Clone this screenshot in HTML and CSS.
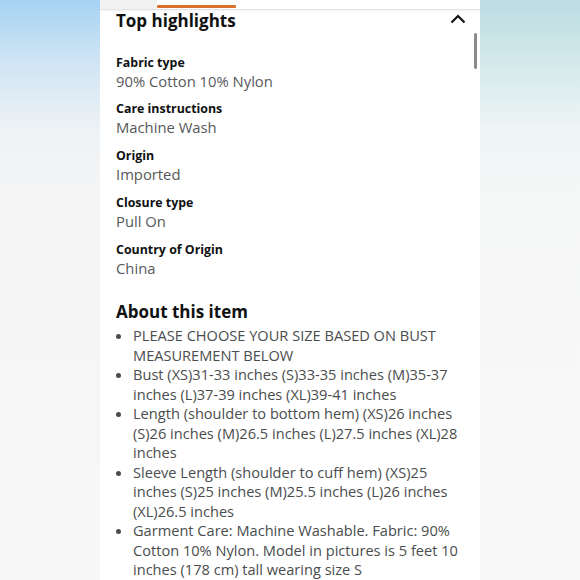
FILE: index.html
```html
<!DOCTYPE html>
<html>
<head>
<meta charset="utf-8">
<link rel="stylesheet" href="styles.css">
</head>
<body>
<div class="page">
  <div class="side side-left"></div>
  <main class="panel">
    <div class="tabs">
      <div class="tab tab-first"></div>
      <div class="tab tab-active"><span class="tab-bar"></span></div>
      <div class="tab tab-rest"></div>
    </div>
    <div class="scrollbar"></div>
    <section class="highlights">
      <div class="section-head">
        <h2 class="title">Top highlights</h2>
        <svg class="chevron" width="16" height="10" viewBox="0 0 16 10"><path d="M1.5 8.5 L8 2 L14.5 8.5" fill="none" stroke="#111" stroke-width="2.2"/></svg>
      </div>
      <dl class="facts">
        <div class="fact"><dt>Fabric type</dt><dd>90% Cotton 10% Nylon</dd></div>
        <div class="fact"><dt>Care instructions</dt><dd>Machine Wash</dd></div>
        <div class="fact"><dt>Origin</dt><dd>Imported</dd></div>
        <div class="fact"><dt>Closure type</dt><dd>Pull On</dd></div>
        <div class="fact"><dt>Country of Origin</dt><dd>China</dd></div>
      </dl>
    </section>
    <section class="about">
      <h2 class="title">About this item</h2>
      <ul class="bullets">
        <li>PLEASE CHOOSE YOUR SIZE BASED ON BUST MEASUREMENT BELOW</li>
        <li>Bust (XS)31-33 inches (S)33-35 inches (M)35-37 inches (L)37-39 inches (XL)39-41 inches</li>
        <li>Length (shoulder to bottom hem) (XS)26 inches (S)26 inches (M)26.5 inches (L)27.5 inches (XL)28 inches</li>
        <li>Sleeve Length (shoulder to cuff hem) (XS)25 inches (S)25 inches (M)25.5 inches (L)26 inches (XL)26.5 inches</li>
        <li>Garment Care: Machine Washable. Fabric: 90% Cotton 10% Nylon. Model in pictures is 5 feet 10 inches (178 cm) tall wearing size S</li>
      </ul>
    </section>
  </main>
  <div class="side side-right"></div>
</div>
</body>
</html>
```
FILE: styles.css
```css
html, body {
  margin: 0;
  padding: 0;
  width: 580px;
  height: 580px;
  overflow: hidden;
}
body {
  font-family: "Open Sans", "Noto Sans", sans-serif;
  color: #0f1111;
}
.page {
  display: flex;
  width: 580px;
  height: 580px;
}
.side {
  width: 100px;
  flex: none;
}
.side-left {
  background: linear-gradient(to bottom, #a6d2f3 0px, #cfe4f4 60px, #eef2f5 130px, #f5f5f5 200px, #f7f7f7 580px);
}
.side-right {
  background: linear-gradient(to bottom, #bbdce2 0px, #d3e8ea 60px, #eef5f5 130px, #f6f7f7 200px, #f8f8f8 580px);
}
.panel {
  width: 380px;
  flex: none;
  background: #fff;
  position: relative;
  padding: 0 0 0 16px;
  box-sizing: border-box;
  overflow: hidden;
}
.tabs {
  display: flex;
  height: 9px;
  margin-left: -16px;
  border-bottom: 1px solid #e3e3e3;
  box-shadow: 0 1px 2px rgba(0,0,0,0.06);
}
.tab-first {
  width: 57px;
  background: #f2f2f2;
}
.tab-active {
  width: 79px;
  display: flex;
  align-items: flex-end;
  padding-bottom: 1px;
}
.tab-bar {
  display: block;
  width: 100%;
  height: 3px;
  background: #d9702c;
  border-radius: 1px;
}
.tab-rest {
  flex: 1;
}
.scrollbar {
  position: absolute;
  left: 374px;
  top: 33px;
  width: 3px;
  height: 36px;
  border-radius: 2px;
  background: #8a8a8a;
}
.section-head {
  display: flex;
  align-items: center;
  justify-content: space-between;
  padding-right: 14px;
}
.title {
  margin: 0;
  font-size: 17px;
  font-weight: 700;
  line-height: 22px;
  color: #0f1111;
}
.chevron {
  margin-top: -5px;
}
.facts {
  margin: 21.5px 0 0;
}
.fact {
  margin-bottom: 8.75px;
}
.fact:last-child {
  margin-bottom: 0;
}
dt {
  font-size: 12.4px;
  font-weight: 700;
  line-height: 17px;
  color: #0f1111;
}
dd {
  margin: 0;
  font-size: 14.8px;
  line-height: 21px;
  color: #565959;
}
.about {
  margin-top: 22.5px;
}
.bullets {
  margin: 3px 0 0;
  padding: 0 16px 0 17px;
  font-size: 14.6px;
  line-height: 19.5px;
  color: #4a4d4d;
}
```
